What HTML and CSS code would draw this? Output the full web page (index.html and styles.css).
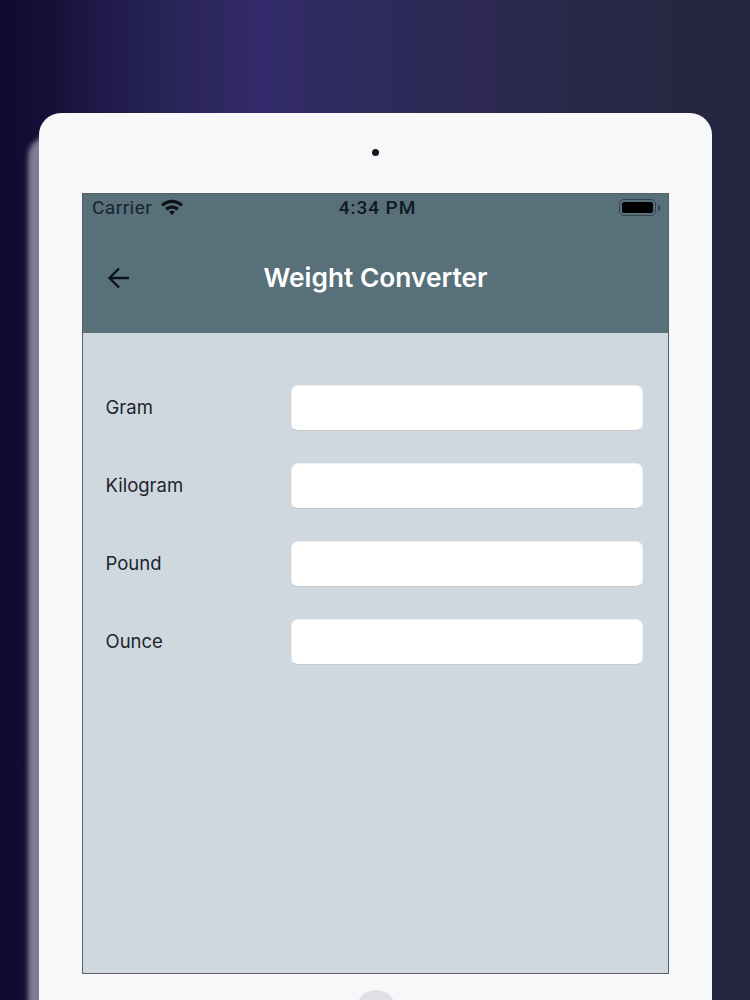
FILE: index.html
```html
<!DOCTYPE html>
<html lang="en">
<head>
<meta charset="utf-8">
<title>Weight Converter</title>
<link rel="stylesheet" href="styles.css">
</head>
<body>
<div class="stage">
  <div class="device">
    <div class="camera-row"><span class="camera"></span></div>
    <div class="screen">
      <header class="appbar">
        <div class="status">
          <div class="status-left">
            <span class="carrier">Carrier</span>
            <svg class="wifi" viewBox="0 0 22 16" width="22" height="16" aria-hidden="true">
              <path d="M0 5.300C6-.9 16-.9 22 5.300l-2.200 2.300C14.500 2.900 7.500 2.900 2.200 7.600z" fill="#0b1218"/>
              <path d="M4 9.100c4-3.500 10-3.500 14 0l-2.200 2.300c-2.800-2.300-6.800-2.300-9.600 0z" fill="#0b1218"/>
              <path d="M8 12.700c1.800-1.400 4.200-1.400 6 0L11 16z" fill="#0b1218"/>
            </svg>
          </div>
          <span class="time">4:34 PM</span>
          <div class="status-right">
            <span class="battery"><span class="battery-fill"></span></span>
            <span class="battery-tip"></span>
          </div>
        </div>
        <div class="toolbar">
          <svg class="back" viewBox="0 0 24 24" width="24" height="24" aria-hidden="true">
            <path d="M23 12H3.500M13 2.500 3.500 12l9.500 9.500" fill="none" stroke="#0b1218" stroke-width="2.400"/>
          </svg>
          <h1 class="title">Weight Converter</h1>
        </div>
      </header>
      <main class="form">
        <div class="row"><label class="label">Gram</label><input class="field" type="text"></div>
        <div class="row"><label class="label">Kilogram</label><input class="field" type="text"></div>
        <div class="row"><label class="label">Pound</label><input class="field" type="text"></div>
        <div class="row"><label class="label">Ounce</label><input class="field" type="text"></div>
      </main>
    </div>
    <div class="home-row"><span class="home"></span></div>
  </div>
</div>
</body>
</html>
```

FILE: styles.css
```css
* { box-sizing: border-box; }
html, body { margin: 0; padding: 0; }
body { width: 750px; height: 1000px; overflow: hidden; font-family: Inter, "Liberation Sans", sans-serif; }

.stage {
  width: 750px;
  height: 1000px;
  overflow: hidden;
  padding: 113px 38px 0 39px;
  background: linear-gradient(90deg, #0f0a2e 0, #151038 50px, #201b4c 110px, #2a2558 180px, #332b6c 265px, #2f2a5e 340px, #2d2953 480px, #282747 600px, #26253e 750px);
}

.device {
  width: 673px;
  height: 930px;
  padding: 0 43px;
  background: #f7f8fa;
  border-radius: 22px 22px 0 0;
  box-shadow: -12px 22px 5px -1px rgba(235, 235, 245, 0.5);
  display: flex;
  flex-direction: column;
}

.camera-row { height: 80px; display: flex; justify-content: center; padding-top: 36px; }
.camera { width: 7px; height: 7px; border-radius: 50%; background: #15151c; }

.screen {
  width: 587px;
  height: 781px;
  flex: none;
  border: 1px solid #5a6068;
  background: #d0d8df;
  display: flex;
  flex-direction: column;
}

.appbar { height: 139px; background: #587079; flex: none; }

.status {
  height: 28px;
  padding: 0 8px 2px 9px;
  display: grid;
  grid-template-columns: 1fr auto 1fr;
  align-items: center;
  color: #0f1a22;
}
.status-left { display: flex; align-items: center; gap: 9px; }
.carrier { font-size: 19px; font-family: Roboto, Inter, sans-serif; color: #16242e; letter-spacing: 0.5px; }
.wifi { display: block; }
.time { font-size: 19px; font-family: Roboto, Inter, sans-serif; font-weight: 500; color: #0f1a22; letter-spacing: 0.95px; margin-left: 3px; }
.status-right { display: flex; justify-content: flex-end; align-items: center; gap: 2px; padding-top: 1px; }
.battery {
  width: 37px;
  height: 17px;
  padding: 2px;
  border: 1px solid #33454f;
  border-radius: 5px;
  display: block;
}
.battery-fill { display: block; width: 100%; height: 100%; background: #000; border-radius: 2px; }
.battery-tip { width: 2px; height: 6px; background: #33454f; border-radius: 0 2px 2px 0; }

.toolbar {
  height: 111px;
  padding: 0 0 0 23px;
  display: flex;
  align-items: center;
}
.back { display: block; flex: none; }
.title {
  margin: 0;
  flex: 1;
  padding-right: 47px;
  text-align: center;
  font-size: 26.300px;
  font-weight: 600;
  color: #fff;
}

.form {
  padding: 52px 25px 0 22.500px;
  display: flex;
  flex-direction: column;
  gap: 32px;
}
.row { display: flex; align-items: center; height: 46px; }
.label { width: 185.500px; flex: none; font-size: 18.500px; color: #1c252d; padding-bottom: 2px; }
.field {
  flex: 1;
  min-width: 0;
  height: 46px;
  background: #fff;
  border: 1px solid #eef0f2;
  border-bottom-color: #c4c9ce;
  border-radius: 7px;
  outline: none;
}

.home-row { flex: 1; display: flex; justify-content: center; padding-top: 16px; }
.home { width: 40px; height: 40px; border-radius: 50%; background: #dfe0e3; }
```
